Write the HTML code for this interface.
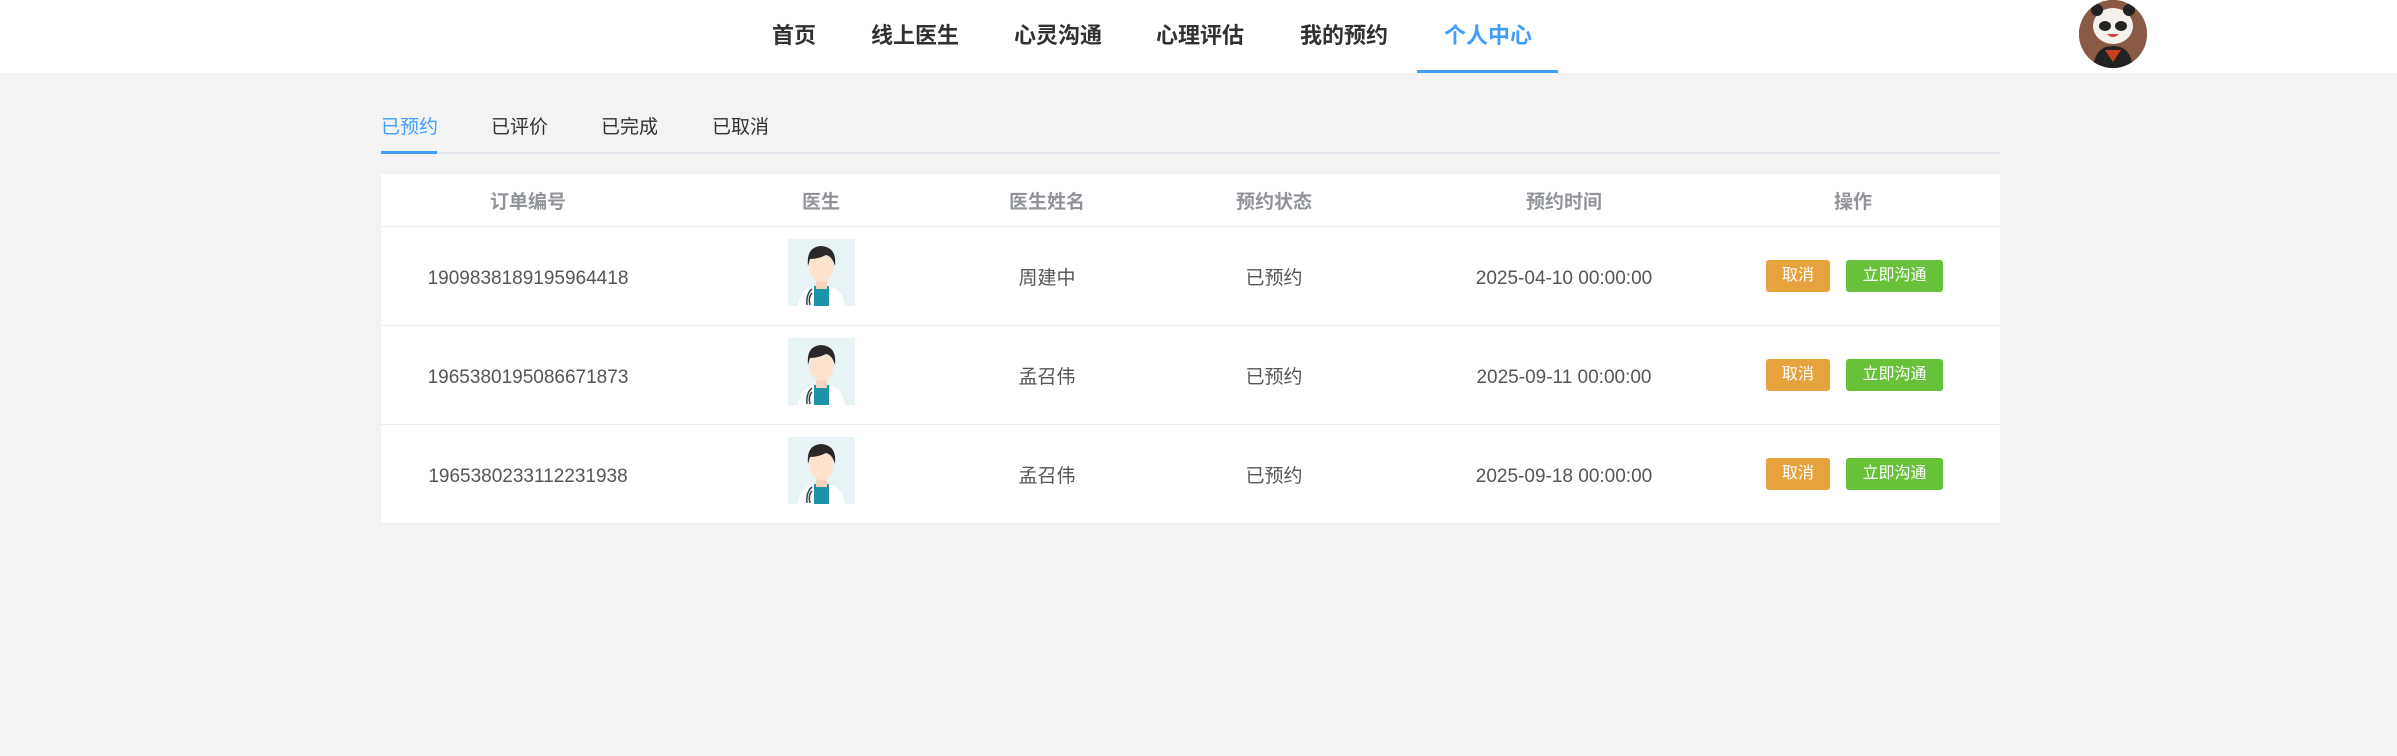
<!DOCTYPE html>
<html><head><meta charset="utf-8"><style>
*{margin:0;padding:0;box-sizing:border-box}
body{width:2397px;height:756px;background:#f3f3f4;font-family:"Liberation Sans","Noto Sans CJK SC",sans-serif;position:relative;overflow:hidden;color:#555}
.nav{position:absolute;left:0;top:0;width:2397px;height:73px;background:#fff}
.ni{position:absolute;top:18px;font-size:22px;font-weight:bold;color:#303133;transform:translateX(-50%);white-space:nowrap}
.ni.a{color:#409eff}
.ul{position:absolute;left:1417px;top:70px;width:141px;height:3px;background:#409eff}
.av{position:absolute;left:2079px;top:0;width:68px;height:68px;border-radius:50%;overflow:hidden;background:#5a3a2e}
.tab{position:absolute;top:112px;font-size:19px;color:#303133}
.tline{position:absolute;left:381px;top:152px;width:1619px;height:2px;background:#e4e7ed}
.tact{position:absolute;left:381px;top:151px;width:56px;height:3px;background:#409eff}
.tbl{position:absolute;left:381px;top:174px;width:1619px;height:350px;background:#fff}
.c{position:absolute;transform:translateX(-50%);white-space:nowrap;font-size:19px;line-height:30px;height:30px}
.h{color:#909399;font-weight:bold;top:14px}
.rl{position:absolute;left:0;width:1619px;height:1px;background:#ebeef5}
.btn{position:absolute;height:32px;border-radius:3px;color:#fff;font-size:16px;line-height:32px;text-align:center}
.o{background:#e6a23c;width:64px}
.g{background:#67c23a;width:97px}
</style></head><body>
<div class="nav">
<div class="ni" style="left:794px">首页</div>
<div class="ni" style="left:915px">线上医生</div>
<div class="ni" style="left:1058px">心灵沟通</div>
<div class="ni" style="left:1200px">心理评估</div>
<div class="ni" style="left:1344px">我的预约</div>
<div class="ni a" style="left:1488px">个人中心</div>
<div class="ul"></div>
<div class="av"><svg width="68" height="68" viewBox="0 0 68 68"><rect width="68" height="68" fill="#8a5a44"/><ellipse cx="34" cy="26" rx="20" ry="18" fill="#f4f1ec"/><ellipse cx="26" cy="26" rx="6" ry="5" fill="#222"/><ellipse cx="42" cy="26" rx="6" ry="5" fill="#222"/><circle cx="18" cy="10" r="6" fill="#222"/><circle cx="50" cy="10" r="6" fill="#222"/><path d="M28 34 Q34 40 40 34Z" fill="#c44"/><path d="M14 68 Q16 46 34 46 Q52 46 54 68Z" fill="#222"/><path d="M26 50 L34 62 L42 50Z" fill="#c8401c"/></svg></div>
</div>
<div class="tab" style="left:381px;color:#409eff">已预约</div>
<div class="tab" style="left:491px">已评价</div>
<div class="tab" style="left:601px">已完成</div>
<div class="tab" style="left:712px">已取消</div>
<div class="tline"></div><div class="tact"></div>
<div class="tbl">
<div class="c h" style="left:147px">订单编号</div>
<div class="c h" style="left:440px">医生</div>
<div class="c h" style="left:666px">医生姓名</div>
<div class="c h" style="left:893px">预约状态</div>
<div class="c h" style="left:1183px">预约时间</div>
<div class="c h" style="left:1472px">操作</div>
<div class="rl" style="top:52px"></div>
<div class="rl" style="top:151px"></div>
<div class="rl" style="top:250px"></div>
<div class="rl" style="top:349px"></div>
</div>
<div id="rows"></div>
<script>
var d=[["1909838189195964418","周建中","2025-04-10 00:00:00"],["1965380195086671873","孟召伟","2025-09-11 00:00:00"],["1965380233112231938","孟召伟","2025-09-18 00:00:00"]];
var h="";
d.forEach(function(r,i){var t=174+52+i*99;var ty=t+38;
h+='<div class="c" style="left:528px;top:'+ty+'px;color:#555">'+r[0]+'</div>';
h+='<svg style="position:absolute;left:788px;top:'+(t+13)+'px" width="67" height="67" viewBox="0 0 67 67"><rect width="67" height="67" fill="#e8f3f5"/><path d="M10 67 Q12 50 26 47 L41 47 Q55 50 57 67Z" fill="#fff"/><rect x="26" y="47" width="15" height="20" fill="#1c93a8"/><rect x="28" y="38" width="11" height="12" fill="#f5d5bd"/><ellipse cx="33.5" cy="28" rx="12" ry="15" fill="#fbe3cf"/><path d="M20 27 Q18 8 33 7 Q49 8 47 27 Q44 17 38 16 Q30 20 22 20Z" fill="#2b2729"/><path d="M24 50 Q18 55 19 66 M22 66 Q20 58 24 54" stroke="#345" stroke-width="1.5" fill="none"/></svg>';
h+='<div class="c" style="left:1047px;top:'+ty+'px">'+r[1]+'</div>';
h+='<div class="c" style="left:1274px;top:'+ty+'px">已预约</div>';
h+='<div class="c" style="left:1564px;top:'+ty+'px;color:#555">'+r[2]+'</div>';
h+='<div class="btn o" style="left:1766px;top:'+(t+34)+'px">取消</div>';
h+='<div class="btn g" style="left:1846px;top:'+(t+34)+'px">立即沟通</div>';});
document.getElementById("rows").innerHTML=h;
</script>
</body></html>
